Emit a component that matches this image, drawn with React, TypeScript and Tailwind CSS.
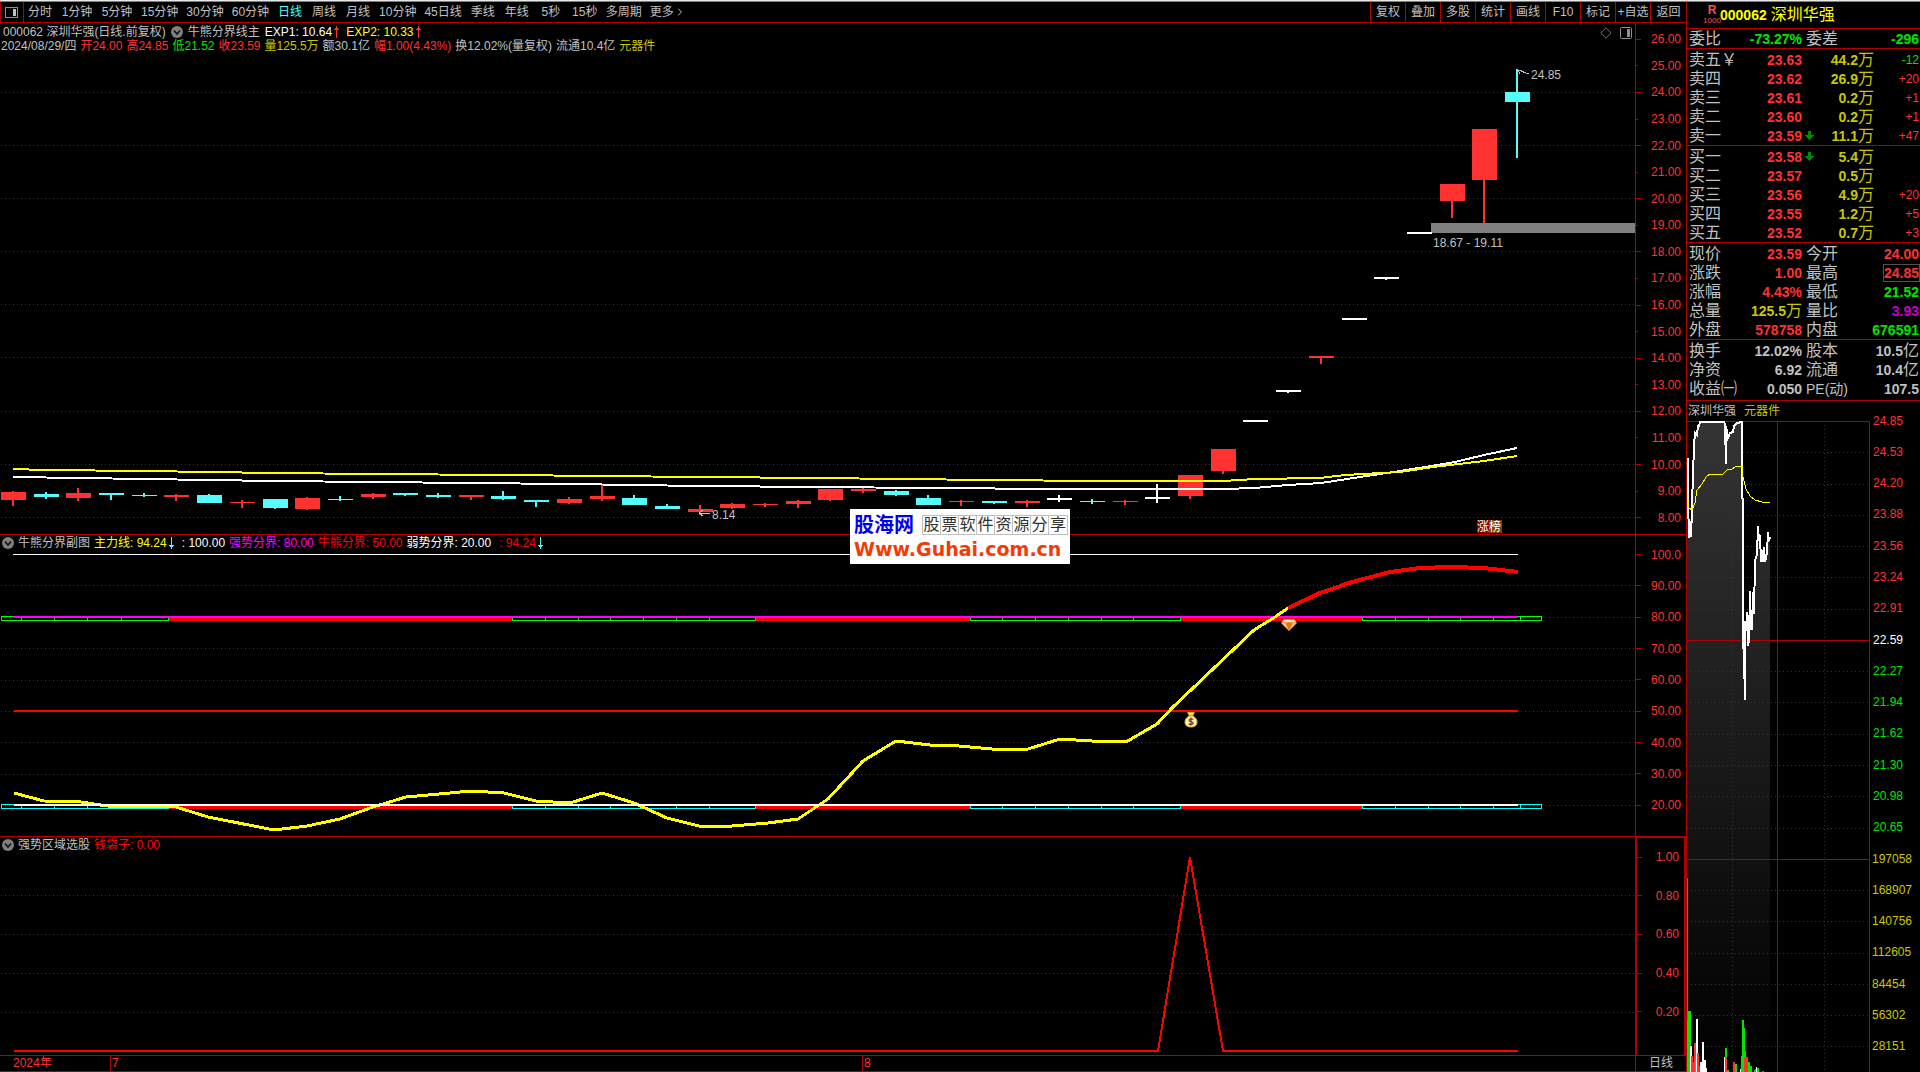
import type { ReactNode } from 'react';
import { ChevronRight } from 'lucide-react';

const periods = [
  '分时', '1分钟', '5分钟', '15分钟', '30分钟', '60分钟', '日线', '周线', '月线',
  '10分钟', '45日线', '季线', '年线', '5秒', '15秒', '多周期',
];
const tools = ['复权', '叠加', '多股', '统计', '画线', 'F10', '标记', '+自选'];

const RED = '#ff3232';
const CYAN = '#54fcfc';
const WHITE = '#ffffff';
const GRID = '#b00000';

// body top, body bottom, high, low, colour
const candles: [number, number, number, number, string][] = [
  [492, 500, 491, 506, RED], [494, 497, 492, 499, CYAN], [493, 498, 488, 501, RED],
  [493, 495, 493, 500, CYAN], [495, 496, 493, 497, CYAN], [495, 497, 494, 501, RED],
  [495, 503, 494, 503, CYAN], [502, 503, 500, 508, RED], [499, 508, 499, 509, CYAN],
  [498, 509, 497, 510, RED], [499, 500, 496, 501, CYAN], [494, 497, 493, 499, RED],
  [493, 495, 493, 496, CYAN], [495, 497, 493, 498, CYAN], [495, 497, 495, 500, RED],
  [496, 499, 491, 500, CYAN], [500, 502, 500, 507, CYAN], [499, 503, 497, 504, RED],
  [496, 499, 485, 501, RED], [498, 505, 495, 505, CYAN], [506, 509, 504, 509, CYAN],
  [509, 512, 505, 515, RED], [504, 508, 503, 509, RED], [504, 505, 503, 507, RED],
  [501, 504, 500, 508, RED], [489, 500, 489, 501, RED], [489, 491, 488, 493, RED],
  [491, 495, 490, 496, CYAN], [498, 505, 495, 505, CYAN], [501, 502, 500, 506, RED],
  [501, 503, 501, 504, CYAN], [501, 503, 500, 507, RED], [498, 500, 495, 502, WHITE],
  [501, 502, 499, 504, CYAN], [501, 502, 500, 505, RED], [497, 499, 484, 503, WHITE],
  [475, 496, 475, 499, RED], [449, 471, 449, 474, RED], [420, 422, 420, 422, WHITE],
  [390, 392, 390, 393, WHITE], [356, 358, 356, 364, RED], [318, 320, 318, 320, WHITE],
  [277, 279, 277, 280, WHITE], [232, 234, 232, 234, WHITE], [184, 201, 184, 218, RED],
  [129, 180, 129, 223, RED], [92, 102, 69, 158, CYAN],
];
const STEP = 1504 / 46;

const slowLine =
  '13,469 45,470 144,471 209,472 274,473 372,474 504,475 602,476 700,477 820,478 897,479 994,480 1092,481 1223,481 1255,479 1320,478 1345,475 1400,472 1433,467 1484,461 1517,456';
const fastLine =
  '13,477 79,478 144,479 209,480 274,481 372,482 471,483 569,484 634,485 700,486 820,487 928,488 1060,489 1223,489 1255,488 1288,485 1321,483 1360,477 1400,471 1425,467 1455,462 1484,455 1517,448';
const mainForce =
  '14,793 44,801 81,802 107,806 176,807 208,817 274,830 307,826 340,819 373,807 406,797 439,794 471,791 504,793 536,801 570,803 602,793 634,803 667,818 699,826 732,826 768,823 798,819 828,799 863,761 896,741 930,745 959,746 992,749 1028,749 1060,739 1092,741 1126,742 1157,724 1172,708 1254,630 1275,617 1288,608';
const mainForceHot =
  '1288,608 1320,593 1352,582 1390,572 1420,568 1451,567 1484,568 1518,572';

const ribbons = [
  { from: 1, to: 169, hot: false, ticks: [21, 54, 87, 121] },
  { from: 169, to: 512, hot: true, ticks: [] },
  { from: 512, to: 756, hot: false, ticks: [545, 578, 610, 643, 676, 709] },
  { from: 756, to: 970, hot: true, ticks: [] },
  { from: 970, to: 1181, hot: false, ticks: [1002, 1035, 1068, 1101, 1133] },
  { from: 1181, to: 1362, hot: true, ticks: [] },
  { from: 1362, to: 1542, hot: false, ticks: [1395, 1428, 1460, 1493, 1520] },
];

const priceAxis = Array.from({ length: 19 }, (_, i) => `${26 - i}.00`);
const forceAxis = ['100.0', '90.00', '80.00', '70.00', '60.00', '50.00', '40.00', '30.00', '20.00'];
const pickAxis = ['1.00', '0.80', '0.60', '0.40', '0.20'];

type Level = { name: string; price: string; volume: string; change?: string; arrow?: boolean };

const sells: Level[] = [
  { name: '卖五￥', price: '23.63', volume: '44.2', change: '-12' },
  { name: '卖四', price: '23.62', volume: '26.9', change: '+20' },
  { name: '卖三', price: '23.61', volume: '0.2', change: '+1' },
  { name: '卖二', price: '23.60', volume: '0.2', change: '+1' },
  { name: '卖一', price: '23.59', volume: '11.1', change: '+47', arrow: true },
];
const buys: Level[] = [
  { name: '买一', price: '23.58', volume: '5.4', arrow: true },
  { name: '买二', price: '23.57', volume: '0.5' },
  { name: '买三', price: '23.56', volume: '4.9', change: '+20' },
  { name: '买四', price: '23.55', volume: '1.2', change: '+5' },
  { name: '买五', price: '23.52', volume: '0.7', change: '+3' },
];

type Stat = { label: string; value: string; unit?: string; color: string; boxed?: boolean };

const stats: [Stat, Stat][] = [
  [{ label: '现价', value: '23.59', color: 'text-[#ff3232]' }, { label: '今开', value: '24.00', color: 'text-[#ff3232]' }],
  [{ label: '涨跌', value: '1.00', color: 'text-[#ff3232]' }, { label: '最高', value: '24.85', color: 'text-[#ff3232]', boxed: true }],
  [{ label: '涨幅', value: '4.43%', color: 'text-[#ff3232]' }, { label: '最低', value: '21.52', color: 'text-[#00e600]' }],
  [{ label: '总量', value: '125.5', unit: '万', color: 'text-[#c8c800]' }, { label: '量比', value: '3.93', color: 'text-[#c800c8]' }],
  [{ label: '外盘', value: '578758', color: 'text-[#ff3232]' }, { label: '内盘', value: '676591', color: 'text-[#00e600]' }],
];
const basics: [Stat, Stat][] = [
  [{ label: '换手', value: '12.02%', color: 'text-[#c0c0c0]' }, { label: '股本', value: '10.5', unit: '亿', color: 'text-[#c0c0c0]' }],
  [{ label: '净资', value: '6.92', color: 'text-[#c0c0c0]' }, { label: '流通', value: '10.4', unit: '亿', color: 'text-[#c0c0c0]' }],
  [{ label: '收益㈠', value: '0.050', color: 'text-[#c0c0c0]' }, { label: 'PE(动)', value: '107.5', color: 'text-[#c0c0c0]' }],
];

const minuteAxis = [
  '24.85', '24.53', '24.20', '23.88', '23.56', '23.24', '22.91', '22.59', '22.27', '21.94', '21.62',
  '21.30', '20.98', '20.65', '197058', '168907', '140756', '112605', '84454', '56302', '28151',
];
const minutePrice =
  '1,37 1,78 2,116 4,115 4,101 5,101 5,82 6,55 7,24 8,12 10,14 11,5 12,5 13,1 37,1 38,3 39,43 39,5 41,17 43,12 46,11 47,5 50,2 55,1 55,77 56,78 56,219 57,236 58,279 58,200 60,210 60,191 61,225 62,219 63,170 64,208 65,208 66,171 67,193 68,140 70,133 71,105 72,120 73,114 74,141 75,129 76,141 77,126 78,141 80,131 81,111 82,120 83,116';
const minuteAverage =
  '1,78 2,87 5,89 8,82 10,69 15,63 19,56 23,53 36,53 40,49 45,48 50,45 55,45 56,56 59,68 63,75 68,79 75,81 83,81';

// x, width, top, colour
const minuteVolume: [number, number, number, string][] = [
  [0, 1, 457, RED], [1, 3, 590, '#00e600'], [0, 1, 600, '#00e600'], [3, 2, 625, WHITE], [4, 2, 635, RED], [6, 1, 641, RED],
  [7, 2, 622, RED], [8, 2, 638, '#00e600'], [9, 2, 598, WHITE], [10, 2, 632, RED], [12, 2, 645, RED],
  [13, 2, 641, WHITE], [15, 2, 621, WHITE], [17, 2, 639, WHITE], [19, 1, 647, WHITE],
  [37, 1, 636, WHITE], [38, 2, 627, '#00e600'], [38, 2, 636, RED], [40, 2, 649, '#00e600'],
  [46, 2, 641, RED], [48, 2, 643, '#00e600'], [53, 1, 648, WHITE], [54, 4, 635, '#00e600'],
  [55, 2, 599, '#00e600'], [57, 1, 607, '#00e600'], [58, 1, 630, '#00e600'], [57, 4, 636, RED],
  [61, 2, 641, '#00e600'], [63, 2, 645, '#00e600'], [67, 2, 649, '#00e600'], [69, 1, 646, WHITE],
  [70, 2, 647, '#00e600'], [68, 1, 648, RED], [75, 2, 650, RED],
];

function ChevronBadge() {
  return (
    <svg className="h-3 w-3 shrink-0" viewBox="0 0 12 12">
      <circle cx="6" cy="6" r="6" fill="#808080" />
      <path d="M3 4.5 6 8l3-3.5" fill="none" stroke="#101010" strokeWidth="1.6" />
    </svg>
  );
}

function Arrow({ down = false, color }: { down?: boolean; color: string }) {
  return (
    <svg className="h-3 w-[5px] shrink-0" viewBox="0 0 5 12" shapeRendering="crispEdges" fill={color}>
      {down ? <path d="M2 0h1v8h2v1H4v1H3v2H2v-2H1V9H0V8h2z" /> : <path d="M2 0h1v2h1v1h1v1H3v8H2V4H0V3h1V2h1z" />}
    </svg>
  );
}

function LevelArrow() {
  return (
    <svg className="ml-[3px] h-[9px] w-[9px]" viewBox="0 0 9 9" shapeRendering="crispEdges" fill="#008c00">
      <path d="M3 0h3v4h3v1H8v1H7v1H6v1H5v1H4V8H3V7H2V6H1V5H0V4h3z" />
    </svg>
  );
}

function Axis({ labels, className }: { labels: string[]; className: string }) {
  return (
    <div className={`flex flex-col text-xs text-[#ff3232] ${className}`}>
      {labels.map((label, i) => (
        <div key={label} className="flex min-h-0 flex-1 items-center justify-between pr-[5px] leading-none">
          <span className={`h-px bg-[#b00000] ${i % 2 && labels.length > 9 ? 'w-[2px]' : 'w-[5px]'}`} />
          {label}
        </div>
      ))}
    </div>
  );
}

function GridLines({ ys }: { ys: number[] }) {
  return (
    <g stroke={GRID} strokeDasharray="1 3">
      {ys.map((y) => <line key={y} x1="1" x2="1635" y1={y + 0.5} y2={y + 0.5} />)}
    </g>
  );
}

function Ribbon({ y, color }: { y: number; color: string }) {
  return (
    <g>
      {ribbons.map((r) =>
        r.hot ? (
          <rect key={r.from} x={r.from} y={y} width={r.to - r.from} height="4" fill="#ff0000" />
        ) : (
          <g key={r.from} stroke={color} fill="none">
            <rect x={r.from + 0.5} y={y - 0.5} width={r.to - r.from - 1} height="4" />
            {r.ticks.map((x) => <line key={x} x1={x + 0.5} x2={x + 0.5} y1={y} y2={y + 4} />)}
          </g>
        ),
      )}
    </g>
  );
}

function PanelHeader({ children }: { children: ReactNode }) {
  return <div className="absolute left-[2px] top-px flex h-[14px] items-center gap-1 whitespace-nowrap">{children}</div>;
}

function Toolbar() {
  return (
    <div className="flex h-[21px] shrink-0 items-stretch border-b border-[#b00000]">
      <button aria-label="布局" className="mr-[3px] flex w-6 shrink-0 items-center border-x border-[#b00000] pl-1">
        <svg className="h-[11px] w-[13px]" viewBox="0 0 13 11" shapeRendering="crispEdges">
          <rect x="0.5" y="0.5" width="12" height="10" fill="none" stroke="#909090" />
          <rect x="8" y="2" width="3" height="7" fill="#c0c0c0" />
        </svg>
      </button>
      <nav className="flex min-w-0 flex-1 gap-2 overflow-hidden whitespace-nowrap">
        {periods.map((p) => (
          <button
            key={p}
            className={`shrink-0 ${p.endsWith('分钟') ? 'min-w-8' : 'min-w-[26px]'} ${p === '日线' ? 'text-[#54fcfc]' : ''}`}
          >
            {p}
          </button>
        ))}
        <button className="flex shrink-0 items-center">
          更多
          <ChevronRight className="h-3 w-3" strokeWidth={2} />
        </button>
      </nav>
      <div className="flex">
        {tools.map((t) => (
          <button key={t} className="w-[35px] whitespace-nowrap border-l border-[#b00000]">{t}</button>
        ))}
        <button className="w-9 border-l border-[#b00000]">返回</button>
      </div>
    </div>
  );
}

function PricePanel() {
  return (
    <section className="flex min-h-0 border-b border-[#b00000]">
      <div className="relative min-w-0 flex-1">
        <svg className="absolute inset-0 h-full w-full" viewBox="0 23 1635 511" preserveAspectRatio="none" shapeRendering="crispEdges">
          <GridLines ys={[92, 145, 198, 251, 304, 357, 411, 464, 517]} />
          <rect x="1431" y="223" width="204" height="10" fill="#808080" />
          {candles.map(([top, bottom, high, low, color], i) => {
            const x = Math.round(13 + i * STEP);
            return (
              <g key={i} fill={color}>
                <rect x={x - 12} y={top} width="25" height={bottom - top} />
                <rect x={x - 1} y={high} width="2" height={low - high} />
              </g>
            );
          })}
          <g fill="none" strokeWidth="2">
            <polyline points={fastLine} stroke="#fff" />
            <polyline points={slowLine} stroke="#ff0" />
          </g>
          <g stroke="#c0c0c0" fill="none">
            <path d="M1518 70l11 4M1518 70h4M1518 70l2 4" />
            <path d="M699 513h11M699 513l4-3M699 513l4 3" />
          </g>
          <g fill="#c0c0c0" fontSize="12">
            <text x="1531" y="79">24.85</text>
            <text x="1433" y="247">18.67 - 19.11</text>
            <text x="712" y="519">8.14</text>
          </g>
          <rect x="1477" y="520" width="12" height="13" fill="#800000" />
          <rect x="1489" y="520" width="13" height="13" fill="#804000" />
          <text x="1477" y="531" fill="#fff" fontSize="12">涨榜</text>
        </svg>

        <div className="absolute left-px top-[2px] whitespace-nowrap">
          <div className="flex h-[14px] items-center gap-[5px] pl-[2px]">
            <span>000062 深圳华强(日线.前复权)</span>
            <ChevronBadge />
            <span>牛熊分界线主</span>
            <span className="flex items-center gap-[2px] text-white">EXP1: 10.64<Arrow color={RED} /></span>
            <span className="ml-[2px] flex items-center gap-[2px] text-[#ff0]">EXP2: 10.33<Arrow color={RED} /></span>
          </div>
          <div className="flex h-[14px] items-center gap-1">
            <span>2024/08/29/四</span>
            <span className="text-[#ff3232]">开24.00</span>
            <span className="text-[#ff3232]">高24.85</span>
            <span className="text-[#00e600]">低21.52</span>
            <span className="text-[#ff3232]">收23.59</span>
            <span className="text-[#c8c800]">量125.5万</span>
            <span>额30.1亿</span>
            <span className="text-[#ff3232]">幅1.00(4.43%)</span>
            <span>换12.02%(量复权)</span>
            <span>流通10.4亿</span>
            <span className="text-[#c8c800]">元器件</span>
          </div>
        </div>

        <div className="absolute right-[3px] top-1 flex items-center gap-2">
          <button aria-label="标记点">
            <svg className="h-3 w-3" viewBox="0 0 12 12"><path d="M6 .8 11.2 6 6 11.2.8 6z" fill="none" stroke="#707070" /></svg>
          </button>
          <button aria-label="侧栏">
            <svg className="h-3 w-3" viewBox="0 0 12 12"><rect x=".5" y=".5" width="11" height="11" rx="1" fill="none" stroke="#909090" /><path d="M7 2h3v8H7z" fill="#909090" /></svg>
          </button>
        </div>
      </div>
      <Axis labels={priceAxis} className="w-[51px] border-l border-[#b00000] py-[3px]" />
    </section>
  );
}

function ForcePanel() {
  return (
    <section className="flex min-h-0 border-b border-[#b00000]">
      <div className="relative min-w-0 flex-1">
        <svg className="absolute inset-0 h-full w-full" viewBox="0 535 1635 301" preserveAspectRatio="none" shapeRendering="crispEdges">
          <GridLines ys={[585, 617, 648, 680, 711, 742, 774, 805]} />
          <rect x="13" y="554" width="1505" height="1" fill="#fff" />
          <Ribbon y={617} color="#00ff00" />
          <Ribbon y={805} color="#00ffff" />
          <rect x="14" y="616" width="1504" height="2" fill="#f0f" />
          <rect x="14" y="710" width="1504" height="2" fill="#f00" />
          <g fill="none" strokeLinejoin="round">
            <polyline points={mainForce} stroke="#ff0" strokeWidth="3" />
            <polyline points={mainForceHot} stroke="#f00" strokeWidth="4" />
          </g>
          <rect x="14" y="804" width="1504" height="2" fill="#fff" />
          {/* diamond */}
          <g shapeRendering="auto">
            <path d="M1284 619h10l3 4-8 8-8-8z" fill="#f0a050" stroke="#a85a20" strokeWidth=".6" />
            <path d="M1284 620h10l2 2h-14z" fill="#ffe2b8" />
            <path d="M1285 624q4-3 8 0l-4 6z" fill="#e07818" />
            <path d="M1282 623h3l3 6z" fill="#ffd8a0" />
            <path d="M1296 623h-3l-3 6z" fill="#ffc080" />
          </g>
          {/* money bag */}
          <g shapeRendering="auto">
            <path d="M1187 712h8l-2 4h-4z" fill="#ffe040" stroke="#6a4a10" strokeWidth=".6" />
            <path d="M1189 716h4c3 2 4 4 4 6 0 4-3 5-6 5s-6-1-6-5c0-2 1-4 4-6z" fill="#fff2b0" stroke="#d8b020" />
            <path d="M1193.500 719.500c-1-1.200-4.500-1-4.500.8 0 2 4.300 1 4.300 3 0 1.600-3.600 1.700-4.600.3M1191 717.500v8" fill="none" stroke="#6a2020" strokeWidth="1.100" />
          </g>
        </svg>
        <PanelHeader>
          <ChevronBadge />
          <span>牛熊分界副图</span>
          <span className="flex items-center gap-[2px] text-[#ff0]">主力线: 94.24<Arrow down color={CYAN} /></span>
          <span className="ml-1 text-white">: 100.00</span>
          <span className="text-[#f0f]">强势分界: 80.00</span>
          <span className="text-[#f00]">牛熊分界: 50.00</span>
          <span className="text-white">弱势分界: 20.00</span>
          <span className="ml-1 flex items-center gap-[2px] text-[#f00]">: 94.24<Arrow down color={CYAN} /></span>
        </PanelHeader>
      </div>
      <Axis labels={forceAxis} className="w-[51px] border-l border-[#b00000] pb-[15px] pt-1" />
    </section>
  );
}

function PickPanel() {
  return (
    <section className="flex min-h-0 border-b border-[#b00000]">
      <div className="relative min-w-0 flex-1">
        <svg className="absolute inset-0 h-full w-full" viewBox="0 837 1635 218" preserveAspectRatio="none" shapeRendering="crispEdges">
          <GridLines ys={[895, 934, 973, 1012]} />
          <polyline points="14,1051 1158,1051 1190,857 1223,1051 1518,1051" fill="none" stroke="#f00" strokeWidth="2" />
        </svg>
        <PanelHeader>
          <ChevronBadge />
          <span>强势区域选股</span>
          <span className="text-[#f00]">钱袋子: 0.00</span>
        </PanelHeader>
      </div>
      <Axis labels={pickAxis} className="w-[51px] border-x-2 border-t border-[#b00000] pb-6" />
    </section>
  );
}

function Timeline() {
  return (
    <div className="flex border-b border-[#b00000] text-[#ff3232]">
      <div className="grid min-w-0 flex-1 grid-cols-[110fr_752fr_773fr] leading-[15px]">
        <span className="pl-[13px]">2024年</span>
        <span className="border-l border-[#b00000] pl-px">7</span>
        <span className="border-l border-[#b00000] pl-px">8</span>
      </div>
      <div className="w-[51px] border-l border-[#b00000] text-center leading-[15px] text-[#c0c0c0]">日线</div>
    </div>
  );
}

function LevelTable({ rows, caption }: { rows: Level[]; caption: string }) {
  return (
    <div className="h-[97px] shrink-0 border-b border-[#b00000] pt-px">
      <table aria-label={caption} className="w-full table-fixed border-collapse">
        <colgroup>
          <col className="w-[50px]" /><col className="w-[65px]" /><col className="w-3" /><col className="w-[60px]" /><col />
        </colgroup>
        <tbody>
          {rows.map((r) => (
            <tr key={r.name} className="h-[19px]">
              <th scope="row" className="whitespace-nowrap p-0 pl-[2px] text-left text-base font-normal leading-4">{r.name}</th>
              <td className="p-0 text-right text-sm font-bold leading-4 text-[#ff3232]">{r.price}</td>
              <td className="p-0">{r.arrow && <LevelArrow />}</td>
              <td className="whitespace-nowrap p-0 text-right text-sm font-bold leading-4 text-[#c8c800]">
                {r.volume}<span className="text-base font-normal leading-none">万</span>
              </td>
              <td className={`p-0 pr-px text-right text-xs leading-4 ${r.change?.startsWith('-') ? 'text-[#00e600]' : 'text-[#ff3232]'}`}>{r.change}</td>
            </tr>
          ))}
        </tbody>
      </table>
    </div>
  );
}

function StatTable({ rows, caption, className = '' }: { rows: [Stat, Stat][]; caption: string; className?: string }) {
  return (
    <div className={`shrink-0 border-b border-[#b00000] pt-px ${className}`}>
      <table aria-label={caption} className="w-full table-fixed border-collapse">
        <colgroup>
          <col className="w-[50px]" /><col className="w-[65px]" /><col className="w-[48px]" /><col />
        </colgroup>
        <tbody>
          {rows.map((pair) => (
            <tr key={pair[0].label} className="h-[19px]">
              {pair.map((s, i) => [
                <th key="l" scope="row" className={`whitespace-nowrap p-0 text-left font-normal leading-4 ${i ? 'pl-1' : 'pl-[2px]'} ${s.label.startsWith('PE') ? 'text-sm' : 'text-base'}`}>{s.label}</th>,
                <td key="v" className={`whitespace-nowrap p-0 text-right text-sm font-bold leading-4 ${i ? 'pr-px' : ''} ${s.color}`}>
                  <span className={s.boxed ? 'outline outline-[#505050]' : ''}>{s.value}</span>
                  {s.unit && <span className="text-base font-normal leading-none">{s.unit}</span>}
                </td>,
              ])}
            </tr>
          ))}
        </tbody>
      </table>
    </div>
  );
}

function MinuteChart() {
  const rows = Array.from({ length: 21 }, (_, i) => Math.round(i * 31.27));
  return (
    <div className="flex min-h-0 flex-1">
      <div className="flex min-w-0 flex-1 flex-col">
        <div className="flex h-5 shrink-0 items-center gap-2 pl-px">
          <span>深圳华强</span>
          <span className="text-[#c8c800]">元器件</span>
        </div>
        <div className="relative min-h-0 flex-1">
          <svg className="absolute inset-0 h-full w-full" viewBox="0 0 183 651" preserveAspectRatio="none" shapeRendering="crispEdges">
            <defs>
              <linearGradient id="fade" x1="0" y1="0" x2="0" y2="651" gradientUnits="userSpaceOnUse">
                <stop offset="0" stopColor="#343434" />
                <stop offset="1" stopColor="#000" />
              </linearGradient>
            </defs>
            <polygon points={`0,651 0,37 ${minutePrice} 83,651`} fill="url(#fade)" />
            {rows.map((y, i) => (
              <line key={y} x1="0" x2="183" y1={y + 0.5} y2={y + 0.5} stroke={GRID} strokeDasharray={i % 7 ? '1 3' : undefined} />
            ))}
            <g stroke={GRID}>
              <line x1="45.500" x2="45.500" y1="0" y2="651" strokeDasharray="1 3" />
              <line x1="90.500" x2="90.500" y1="0" y2="651" />
              <line x1="137.500" x2="137.500" y1="0" y2="651" strokeDasharray="1 3" />
              <line x1="182.500" x2="182.500" y1="0" y2="651" />
            </g>
            <polyline points={minutePrice} fill="none" stroke="#fff" strokeWidth="2" />
            <polyline points={minuteAverage} fill="none" stroke="#ff0" />
            {minuteVolume.map(([x, w, top, color], i) => (
              <rect key={i} x={x} y={top} width={w} height={651 - top} fill={color} />
            ))}
          </svg>
        </div>
      </div>
      <div className="flex w-[50px] shrink-0 flex-col pb-[10px] pt-1">
        {minuteAxis.map((label, i) => (
          <span
            key={label}
            className={`flex min-h-0 flex-1 items-center leading-none ${
              i < 7 ? 'pl-[3px] text-[#ff3232]' : i === 7 ? 'pl-[3px] text-white' : i < 14 ? 'pl-[3px] text-[#00e600]' : 'pl-[2px] text-[#c8c800]'
            }`}
          >
            {label}
          </span>
        ))}
      </div>
    </div>
  );
}

function QuotePanel() {
  return (
    <aside className="flex w-[234px] shrink-0 flex-col overflow-hidden border-l border-[#b00000]">
      <header className="flex h-[27px] shrink-0 items-center border-b border-[#b00000] pl-[17px] text-[#ff0]">
        <span className="flex w-4 flex-col items-center text-[#ff5050]">
          <b className="leading-[11px]">R</b>
          <span className="text-[8px] leading-[9px]">1000</span>
        </span>
        <b className="text-sm">000062</b>
        <h1 className="ml-1 text-base leading-5">深圳华强</h1>
      </header>
      <div className="flex h-5 shrink-0 items-center border-b border-[#b00000] pl-[2px] pr-px text-base leading-[19px]">
        <span className="w-[50px]">委比</span>
        <b className="w-[63px] text-right text-sm text-[#00e600]">-73.27%</b>
        <span className="pl-1">委差</span>
        <b className="flex-1 text-right text-sm text-[#00e600]">-296</b>
      </div>
      <LevelTable rows={sells} caption="卖盘" />
      <LevelTable rows={buys} caption="买盘" />
      <StatTable rows={stats} caption="行情" />
      <StatTable rows={basics} caption="基本面" className="pb-[2px]" />
      <MinuteChart />
    </aside>
  );
}

export default function App() {
  return (
    <div className="flex h-screen flex-col overflow-hidden bg-black font-['Liberation_Sans','Noto_Sans_CJK_SC',sans-serif] text-xs text-[#c0c0c0]">
      <div className="h-[2px] shrink-0 border-b border-[#808080] bg-[#e8e8e8]" />
      <div className="flex min-h-0 flex-1">
        <main className="flex min-w-0 flex-1 flex-col">
          <Toolbar />
          <div className="relative grid min-h-0 flex-1 grid-rows-[minmax(0,512fr)_minmax(0,302fr)_minmax(0,219fr)_16px]">
            <PricePanel />
            <ForcePanel />
            <PickPanel />
            <Timeline />

            {/* site banner floats over the two upper panels */}
            <a href="#guhai" className="absolute left-[850px] top-[486px] flex h-[55px] w-[220px] flex-col justify-center bg-white px-1">
              <span className="flex items-center gap-2">
                <b className="whitespace-nowrap text-xl leading-6 text-[#0000f0]">股海网</b>
                <span className="flex border border-[#c0c0c0] text-base leading-[18px] text-[#303030]">
                  {'股票软件资源分享'.split('').map((c) => (
                    <span key={c} className="w-[18px] border-r border-[#c0c0c0] text-center last:border-r-0">{c}</span>
                  ))}
                </span>
              </span>
              <b className="whitespace-nowrap font-['DejaVu_Sans',sans-serif] text-[19px] leading-6 text-[#f63a05]">Www.Guhai.com.cn</b>
            </a>
          </div>
        </main>
        <QuotePanel />
      </div>
    </div>
  );
}
